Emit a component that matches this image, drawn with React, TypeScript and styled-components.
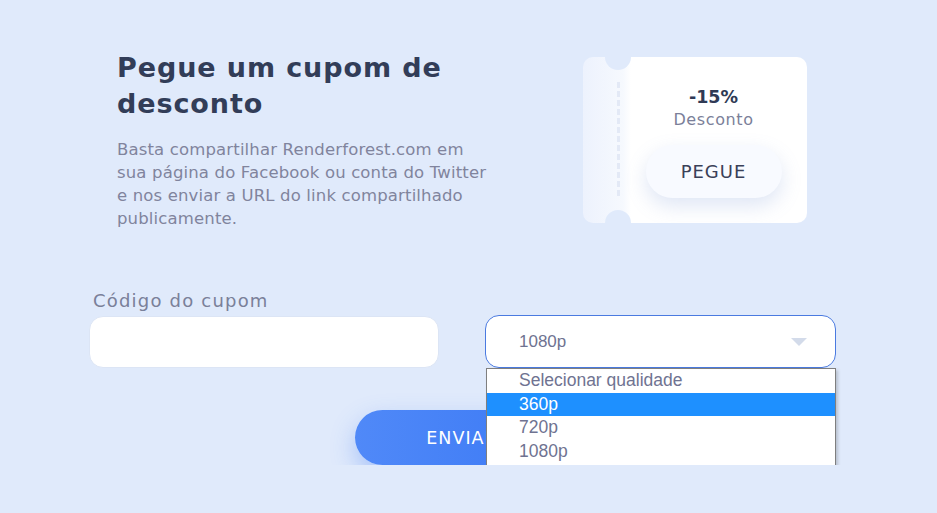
import React from "react";
import styled, { createGlobalStyle } from "styled-components";

const GlobalStyle = createGlobalStyle`
  html, body {
    margin: 0;
    padding: 0;
    background: #e0eafb;
  }
  body {
    font-family: "DejaVu Sans", "Open Sans", sans-serif;
  }
`;

const Page = styled.div`
  width: 746px;
  margin: 0 0 0 89px;
  padding-top: 50px;
`;

const Top = styled.div`
  display: flex;
  justify-content: space-between;
  align-items: flex-start;
  padding: 0 28px 0 28px;
`;

const Intro = styled.div`
  width: 372px;
`;

const Title = styled.h1`
  margin: 0;
  font-size: 27px;
  line-height: 36px;
  font-weight: 700;
  letter-spacing: 0.9px;
  color: #323d58;
`;

const Text = styled.p`
  margin: 16px 0 0;
  font-size: 16.5px;
  line-height: 23px;
  letter-spacing: 0.15px;
  color: #80849d;
`;

const Coupon = styled.div`
  position: relative;
  margin-top: 7px;
  width: 224px;
  height: 166px;
  border-radius: 10px;
  background: linear-gradient(90deg, #edf2fd 0px, #f6f9fe 40px, #ffffff 48px);
  display: flex;
  overflow: hidden;

  &::before,
  &::after {
    content: "";
    position: absolute;
    left: 22px;
    width: 26px;
    height: 26px;
    border-radius: 50%;
    background: #e0eafb;
  }
  &::before {
    top: -13px;
  }
  &::after {
    bottom: -13px;
  }
`;

const Stub = styled.div`
  width: 47px;
  display: flex;
  justify-content: center;
  padding: 25px 0 27px 0;
  box-sizing: border-box;
`;

const Dashes = styled.div`
  width: 0;
  border-left: 3px dashed #e3e9f6;
  margin-left: 23px;
`;

const CouponBody = styled.div`
  flex: 1;
  display: flex;
  flex-direction: column;
  align-items: center;
  padding: 28px 10px 0 0;
`;

const Amount = styled.div`
  font-size: 17.5px;
  font-weight: 700;
  line-height: 24px;
  color: #2f3a55;
`;

const AmountLabel = styled.div`
  font-size: 16px;
  line-height: 22px;
  letter-spacing: 0.6px;
  color: #7b7f99;
`;

const GetButton = styled.button`
  margin-top: 14px;
  width: 136px;
  height: 53px;
  border: none;
  border-radius: 27px;
  background: #f8faff;
  box-shadow: 0 8px 20px rgba(110, 140, 210, 0.22);
  font-family: inherit;
  font-size: 18px;
  letter-spacing: 1px;
  color: #3a4058;
`;

const Form = styled.div`
  margin-top: 60px;
`;

const Label = styled.div`
  padding-left: 4px;
  font-size: 18px;
  line-height: 22px;
  letter-spacing: 1.2px;
  color: #7a8099;
`;

const Row = styled.div`
  margin-top: 3px;
  display: grid;
  grid-template-columns: 350px 351px;
  column-gap: 46px;
  align-items: start;
`;

const Input = styled.input`
  box-sizing: border-box;
  width: 100%;
  height: 52px;
  border: 1px solid #dce5f5;
  border-radius: 14px;
  background: #ffffff;
  outline: none;
  margin-top: 1px;
`;

const SelectWrap = styled.div`
  position: relative;
`;

const SelectBox = styled.div`
  box-sizing: border-box;
  height: 53px;
  border: 1px solid #4a7ae0;
  border-radius: 14px;
  background: #ffffff;
  display: flex;
  align-items: center;
  justify-content: space-between;
  padding: 0 28px 0 33px;
  font-family: "Liberation Sans", Arial, sans-serif;
  font-size: 17px;
  color: #6f7391;
`;

const Caret = styled.span`
  width: 0;
  height: 0;
  border-left: 8px solid transparent;
  border-right: 8px solid transparent;
  border-top: 8px solid #d3dbea;
`;

const Menu = styled.ul`
  position: absolute;
  top: 53px;
  left: 1px;
  right: 0;
  margin: 0;
  padding: 0 0 2px;
  list-style: none;
  background: #ffffff;
  border: 1px solid #7f7f7f;
  box-shadow: 2px 2px 3px rgba(0, 0, 0, 0.18);
  z-index: 2;
  font-family: "Liberation Sans", Arial, sans-serif;
  font-size: 17.5px;
`;

const Option = styled.li<{ $active?: boolean }>`
  height: 23.5px;
  line-height: 23px;
  padding-left: 32px;
  color: ${(p) => (p.$active ? "#ffffff" : "#6f7391")};
  background: ${(p) => (p.$active ? "#1e90ff" : "transparent")};
`;

const Submit = styled.button`
  display: block;
  margin: 42px auto 0;
  width: 214px;
  height: 55px;
  border: none;
  border-radius: 28px;
  background: linear-gradient(90deg, #5089f8, #3b79f5);
  box-shadow: 0 10px 24px rgba(60, 120, 245, 0.35);
  font-family: inherit;
  font-size: 17.5px;
  letter-spacing: 1px;
  color: #ffffff;
`;

const options = ["Selecionar qualidade", "360p", "720p", "1080p"];

export default function App() {
  return (
    <>
      <GlobalStyle />
      <Page>
        <Top>
          <Intro>
            <Title>Pegue um cupom de desconto</Title>
            <Text>
              Basta compartilhar Renderforest.com em sua página do Facebook ou
              conta do Twitter e nos enviar a URL do link compartilhado
              publicamente.
            </Text>
          </Intro>
          <Coupon>
            <Stub>
              <Dashes />
            </Stub>
            <CouponBody>
              <Amount>-15%</Amount>
              <AmountLabel>Desconto</AmountLabel>
              <GetButton>PEGUE</GetButton>
            </CouponBody>
          </Coupon>
        </Top>
        <Form>
          <Label>Código do cupom</Label>
          <Row>
            <Input />
            <SelectWrap>
              <SelectBox>
                <span>1080p</span>
                <Caret />
              </SelectBox>
              <Menu>
                {options.map((o) => (
                  <Option key={o} $active={o === "360p"}>
                    {o}
                  </Option>
                ))}
              </Menu>
            </SelectWrap>
          </Row>
          <Submit>ENVIAR</Submit>
        </Form>
      </Page>
    </>
  );
}
